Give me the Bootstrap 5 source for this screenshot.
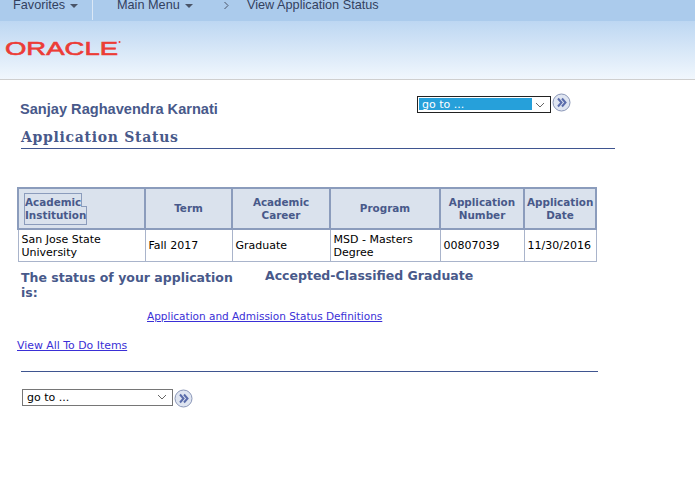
<!DOCTYPE html>
<html lang="en">
<head>
    <meta charset="UTF-8">
    <meta name="viewport" content="width=device-width, initial-scale=1.0">
    <title>View Application Status</title>
    <link href="https://cdn.jsdelivr.net/npm/bootstrap@5.3.0/dist/css/bootstrap.min.css" rel="stylesheet">
    <style>
        body {
            font-family: "DejaVu Sans", Verdana, sans-serif;
            font-size: 11px;
            background-color: #fff;
            color: #000;
            overflow: hidden;
        }

        /* top menu bar */
        .menu-bar {
            height: 21px;
            background-color: #abcbec;
            font-family: "Liberation Sans", Arial, sans-serif;
            font-size: 12.7px;
            color: #33415f;
            line-height: 11px;
        }

        .menu-fav {
            width: 93px;
            height: 20px;
            padding-left: 13px;
            border-right: 1px solid #dbe8f6;
        }

        .menu-main {
            width: 131px;
            padding-left: 24px;
        }

        .menu-sep {
            width: 23px;
        }

        .caret-down {
            display: inline-block;
            width: 0;
            height: 0;
            margin-left: 5px;
            vertical-align: 1px;
            border-left: 4px solid transparent;
            border-right: 4px solid transparent;
            border-top: 4px solid #4a5568;
        }

        .brand-band {
            height: 59px;
            padding: 17px 0 0 5px;
            background: linear-gradient(#bdd7f2, #f1f7fd);
            border-bottom: 1px solid #cfcfcf;
        }

        .brand-band svg {
            display: block;
        }

        /* name and go to row */
        .name-row {
            padding: 16px 0 0 20px;
            height: 43px;
        }

        .person-name {
            width: 397px;
            padding-top: 5px;
            font-family: "Liberation Sans", Arial, sans-serif;
            font-size: 14.6px;
            font-weight: 700;
            line-height: 16px;
            color: #48598a;
        }

        .goto-select {
            height: 17px;
            padding: 0 0 0 4px;
            border: 1px solid #767676;
            border-radius: 0;
            font-family: "DejaVu Sans", Verdana, sans-serif;
            font-size: 11px;
            line-height: 14px;
            color: #000;
            appearance: none;
            background: #fff url("data:image/svg+xml,%3Csvg xmlns='http://www.w3.org/2000/svg' width='10' height='6'%3E%3Cpath d='M1 1l4 4 4-4' fill='none' stroke='%23666'/%3E%3C/svg%3E") no-repeat right 5px center;
        }

        .goto-top {
            width: 134px;
            border-color: #222;
            color: #fff;
            background:
                url("data:image/svg+xml,%3Csvg xmlns='http://www.w3.org/2000/svg' width='10' height='6'%3E%3Cpath d='M1 1l4 4 4-4' fill='none' stroke='%23666'/%3E%3C/svg%3E") no-repeat right 5px center,
                linear-gradient(#26a0da, #26a0da) no-repeat 1px 1px / 113px 12px,
                #fff;
        }

        .goto-bottom {
            width: 151px;
            padding-top: 1px;
        }

        .goto-btn {
            display: block;
            flex: none;
            width: 19px;
            height: 19px;
            margin-left: 1px;
            padding: 0;
            border: 0;
            background: none;
        }

        .goto-top-btn {
            margin-top: -3px;
        }

        .page-title {
            width: 594px;
            height: 26px;
            margin: 0 0 0 21px;
            font-family: "DejaVu Serif", Georgia, serif;
            font-size: 14px;
            font-weight: 700;
            line-height: 28px;
            letter-spacing: 0.7px;
            color: #48598a;
            border-bottom: 1px solid #3f5590;
        }

        /* status grid */
        .status-grid {
            width: 578px;
            margin: 38px 0 0 17px;
            border-collapse: collapse;
            table-layout: fixed;
        }

        .status-grid th {
            height: 41px;
            padding: 1px 2px;
            background-color: #dae2ed;
            border: 2px solid #8b9cbc;
            font-size: 10.4px;
            font-weight: 700;
            line-height: 13px;
            color: #48598a;
            text-align: center;
            vertical-align: middle;
        }

        .status-grid th:first-child {
            padding-left: 6px;
            text-align: left;
        }

        .status-grid td {
            height: 32px;
            padding: 1px 3px 0;
            border: 1px solid #a9b4cb;
            font-size: 11px;
            line-height: 13px;
            vertical-align: middle;
        }

        .focus-link {
            padding: 2px 0 3px;
            color: #48598a;
            text-decoration: none;
            outline: 1px solid #8b9cbc;
        }

        .status-row {
            padding: 8px 0 0 21px;
            font-size: 12.5px;
            font-weight: 700;
            line-height: 15px;
            color: #48598a;
        }

        .status-label {
            width: 244px;
            padding-right: 20px;
        }

        .status-value {
            margin-top: -2px;
        }

        .plain-link {
            font-size: 10.9px;
            line-height: 13px;
            color: #3a2fd6;
        }

        .defs-row {
            padding: 9px 0 0 147px;
        }

        .defs-row .plain-link {
            font-size: 10.5px;
        }

        .todo-row {
            padding: 13px 0 0 17px;
        }

        .foot-rule {
            width: 577px;
            height: 1px;
            margin: 16px 0 0 21px;
            background-color: #3f5590;
        }

        .foot-row {
            padding: 17px 0 0 22px;
        }
    </style>
</head>
<body>
    <!-- menu bar -->
    <div class="menu-bar d-flex">
        <div class="menu-fav">Favorites<span class="caret-down"></span></div>
        <div class="menu-main">Main Menu<span class="caret-down"></span></div>
        <div class="menu-sep">
            <svg width="5" height="9" viewBox="0 0 5 9"><path d="M0.5 1l3.500 3.500-3.500 3.500" fill="none" stroke="#4a5568"></path></svg>
        </div>
        <div>View Application Status</div>
    </div>

    <div class="brand-band">
        <svg width="120" height="20" viewBox="0 0 120 20" role="img" aria-label="Oracle">
            <text x="0" y="17" textLength="113" lengthAdjust="spacingAndGlyphs" font-family="Liberation Sans, Arial, sans-serif" font-size="19" fill="#ec3c36" stroke="#ec3c36" stroke-width="0.6">ORACLE</text>
            <circle cx="114.500" cy="4" r="1" fill="#ec3c36"></circle>
        </svg>
    </div>

    <div class="name-row d-flex align-items-start">
        <div class="person-name">Sanjay Raghavendra Karnati</div>
        <select class="goto-select goto-top" aria-label="go to"><option>go to ...</option></select>
        <button class="goto-btn goto-top-btn" type="button" aria-label="Go">
            <svg width="19" height="19" viewBox="0 0 19 19"><circle cx="9.500" cy="9.500" r="8.500" fill="#dfe5f1" stroke="#8b97b8"></circle><path d="M6 5.500l3.500 4-3.500 4M10 5.500l3.500 4-3.500 4" fill="none" stroke="#5a6cab" stroke-width="2"></path></svg>
        </button>
    </div>

    <div class="page-title">Application Status</div>

    <table class="status-grid">
        <colgroup>
            <col style="width: 127px">
            <col style="width: 87px">
            <col style="width: 98px">
            <col style="width: 110px">
            <col style="width: 84px">
            <col style="width: 72px">
        </colgroup>
        <thead>
            <tr>
                <th><a class="focus-link" href="#">Academic Institution</a></th>
                <th>Term</th>
                <th>Academic Career</th>
                <th>Program</th>
                <th>Application Number</th>
                <th>Application Date</th>
            </tr>
        </thead>
        <tbody>
            <tr>
                <td>San Jose State University</td>
                <td>Fall 2017</td>
                <td>Graduate</td>
                <td>MSD - Masters Degree</td>
                <td>00807039</td>
                <td>11/30/2016</td>
            </tr>
        </tbody>
    </table>

    <div class="status-row d-flex">
        <div class="status-label">The status of your application is:</div>
        <div class="status-value">Accepted-Classified Graduate</div>
    </div>

    <div class="defs-row"><a class="plain-link" href="#">Application and Admission Status Definitions</a></div>
    <div class="todo-row"><a class="plain-link" href="#">View All To Do Items</a></div>

    <div class="foot-rule"></div>

    <div class="foot-row d-flex">
        <select class="goto-select goto-bottom" aria-label="go to"><option>go to ...</option></select>
        <button class="goto-btn" type="button" aria-label="Go">
            <svg width="19" height="19" viewBox="0 0 19 19"><circle cx="9.500" cy="9.500" r="8.500" fill="#dfe5f1" stroke="#8b97b8"></circle><path d="M6 5.500l3.500 4-3.500 4M10 5.500l3.500 4-3.500 4" fill="none" stroke="#5a6cab" stroke-width="2"></path></svg>
        </button>
    </div>

    <script src="https://cdn.jsdelivr.net/npm/bootstrap@5.3.0/dist/js/bootstrap.bundle.min.js"></script>
</body>
</html>
